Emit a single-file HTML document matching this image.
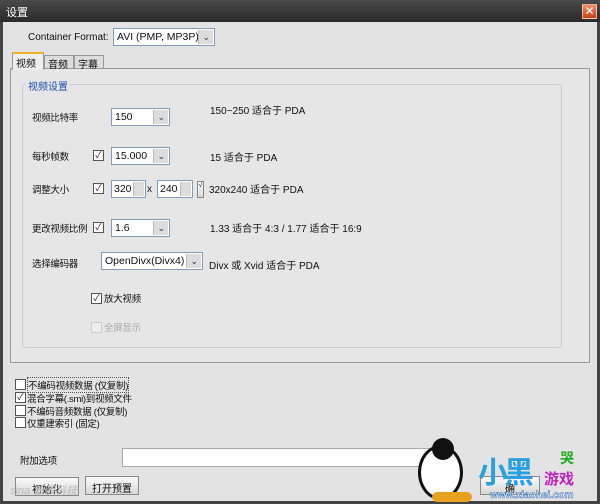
<!DOCTYPE html>
<html><head><meta charset="utf-8"><style>
*{box-sizing:border-box;margin:0;padding:0}
body{width:600px;height:504px;overflow:hidden;background:#e3e3e3;font-family:"Liberation Sans","Noto Sans CJK SC",sans-serif;font-size:10px;color:#111;position:relative}
.a{position:absolute;white-space:nowrap}
.l{font-size:9.5px;letter-spacing:-0.3px}
.title{left:0;top:0;width:600px;height:22px;background:linear-gradient(#4a4a4a,#2a2a2a);color:#fff;font-size:11px;padding:4px 0 0 6px}
.close{left:582px;top:4px;width:15px;height:15px;background:linear-gradient(#f08a6a,#c8421e);border:1px solid #fff8;color:#fff;font-size:12px;line-height:13px;text-align:center}
.sel{position:absolute;background:#fff;border:1px solid #7f9db9;padding:0 0 0 3px;font-size:10.5px;line-height:16px}
.sel::after{content:"";position:absolute;right:1px;top:1px;bottom:1px;width:14px;background:#dcdcdc;border-left:1px solid #bbb}
.sel i{position:absolute;right:4px;top:0;font-style:normal;font-size:9px;z-index:2;color:#333}
.cb{position:absolute;width:11px;height:11px;background:#fff;border:1px solid #555;font-size:9px;line-height:9px;text-align:center;color:#222}
.spin{position:absolute;background:#fff;border:1px solid #7f9db9;padding:0 0 0 2px;font-size:10.5px;line-height:16px}
.spin b{position:absolute;right:1px;top:1px;bottom:1px;width:11px;background:#dcdcdc;border-left:1px solid #bbb}
.btn{position:absolute;border:1px solid #888;background:linear-gradient(#fafafa,#d8d8d8);text-align:center;font-size:10px;padding-top:3px}
</style></head><body>
<div style="position:absolute;left:0;top:0;width:3px;height:504px;background:#444"></div>
<div style="position:absolute;right:0;top:0;width:3px;height:504px;background:#444"></div>
<div style="position:absolute;left:0;bottom:0;width:600px;height:3px;background:#444"></div>
<div class="a title">设置</div>
<div class="a close">✕</div>
<div class="a" style="left:28px;top:32px">Container Format:</div>
<div class="sel" style="left:113px;top:28px;width:102px;height:18px">AVI (PMP, MP3P)<i>⌄</i></div>
<div class="a" style="left:10px;top:68px;width:580px;height:295px;border:1px solid #9a9a9a;background:#e6e6e6"></div>
<div class="a" style="left:12px;top:52px;width:32px;height:18px;background:#eee;border:1px solid #999;border-bottom:none;border-top:2px solid #f0b030;padding:1px 0 0 3px">视频</div>
<div class="a" style="left:44px;top:55px;width:30px;height:14px;background:#ddd;border:1px solid #999;padding:0 0 0 3px">音频</div>
<div class="a" style="left:74px;top:55px;width:30px;height:14px;background:#ddd;border:1px solid #999;padding:0 0 0 3px">字幕</div>
<div class="a" style="left:22px;top:84px;width:540px;height:264px;border:1px solid #ccc;border-radius:3px"></div>
<div class="a" style="left:26px;top:78px;background:#e6e6e6;padding:0 2px;color:#2050b0">视频设置</div>

<div class="a l" style="left:32px;top:110px">视频比特率</div>
<div class="sel" style="left:111px;top:108px;width:59px;height:18px">150<i>⌄</i></div>
<div class="a" style="left:210px;top:102px">150~250 适合于 PDA</div>

<div class="a l" style="left:32px;top:149px">每秒帧数</div>
<div class="cb" style="left:93px;top:150px">✓</div>
<div class="sel" style="left:111px;top:147px;width:59px;height:18px">15.000<i>⌄</i></div>
<div class="a" style="left:210px;top:149px">15 适合于 PDA</div>

<div class="a l" style="left:32px;top:182px">调整大小</div>
<div class="cb" style="left:93px;top:183px">✓</div>
<div class="spin" style="left:111px;top:180px;width:35px;height:18px">320<b></b></div>
<div class="a" style="left:147px;top:184px">x</div>
<div class="spin" style="left:157px;top:180px;width:36px;height:18px">240<b></b></div>
<div class="btn" style="left:197px;top:181px;width:7px;height:17px;padding:0;font-size:7px">√</div>
<div class="a" style="left:209px;top:181px">320x240 适合于 PDA</div>

<div class="a l" style="left:32px;top:221px">更改视频比例</div>
<div class="cb" style="left:93px;top:222px">✓</div>
<div class="sel" style="left:111px;top:219px;width:59px;height:18px">1.6<i>⌄</i></div>
<div class="a" style="left:210px;top:220px">1.33 适合于 4:3 / 1.77 适合于 16:9</div>

<div class="a l" style="left:32px;top:256px">选择编码器</div>
<div class="sel" style="left:101px;top:252px;width:102px;height:18px">OpenDivx(Divx4)<i>⌄</i></div>
<div class="a" style="left:209px;top:257px">Divx 或 Xvid 适合于 PDA</div>

<div class="cb" style="left:91px;top:293px">✓</div>
<div class="a l" style="left:104px;top:291px">放大视频</div>
<div class="cb" style="left:91px;top:322px;border-color:#ccc;background:#eee"></div>
<div class="a l" style="left:104px;top:320px;color:#aaa">全屏显示</div>

<div class="cb" style="left:15px;top:379px"></div>
<div class="a l" style="left:27px;top:377px;border:1px dotted #555">不编码视频数据 (仅复制)</div>
<div class="cb" style="left:15px;top:392px">✓</div>
<div class="a l" style="left:27px;top:391px">混合字幕(.smi)到视频文件</div>
<div class="cb" style="left:15px;top:405px"></div>
<div class="a l" style="left:27px;top:404px">不编码音频数据 (仅复制)</div>
<div class="cb" style="left:15px;top:417px"></div>
<div class="a l" style="left:27px;top:416px">仅重建索引 (固定)</div>

<div class="a l" style="left:20px;top:453px">附加选项</div>
<div class="a" style="left:122px;top:448px;width:310px;height:19px;background:#fff;border:1px solid #aaa"></div>
<div class="btn" style="left:15px;top:477px;width:64px;height:19px">初始化</div>
<div class="btn" style="left:85px;top:476px;width:54px;height:19px">打开预置</div>
<div class="a" style="left:10px;top:482px;color:#bbb;font-size:11px;font-style:italic">sina 新浪科技</div>
<div class="btn" style="left:480px;top:476px;width:60px;height:19px">确</div>

<div class="a" style="left:418px;top:445px;width:45px;height:55px;border-radius:50%;background:#fff;border:3px solid #111"></div>
<div class="a" style="left:432px;top:438px;width:22px;height:22px;border-radius:50%;background:#111"></div>
<div class="a" style="left:432px;top:492px;width:40px;height:10px;border-radius:5px;background:#e8a020"></div>
<div class="a" style="left:478px;top:448px;font-size:30px;font-weight:bold;color:#2aa0e0;letter-spacing:-4px">小黑</div>
<div class="a" style="left:560px;top:448px;font-size:14px;font-weight:bold;color:#2a2">哭</div>
<div class="a" style="left:544px;top:468px;font-size:15px;font-weight:bold;color:#c020c0">游戏</div>
<div class="a" style="left:490px;top:490px;font-size:10px;font-weight:bold;color:#fff;-webkit-text-stroke:0.5px #2a6ab0">www.xiaohei.com</div>
</body></html>
